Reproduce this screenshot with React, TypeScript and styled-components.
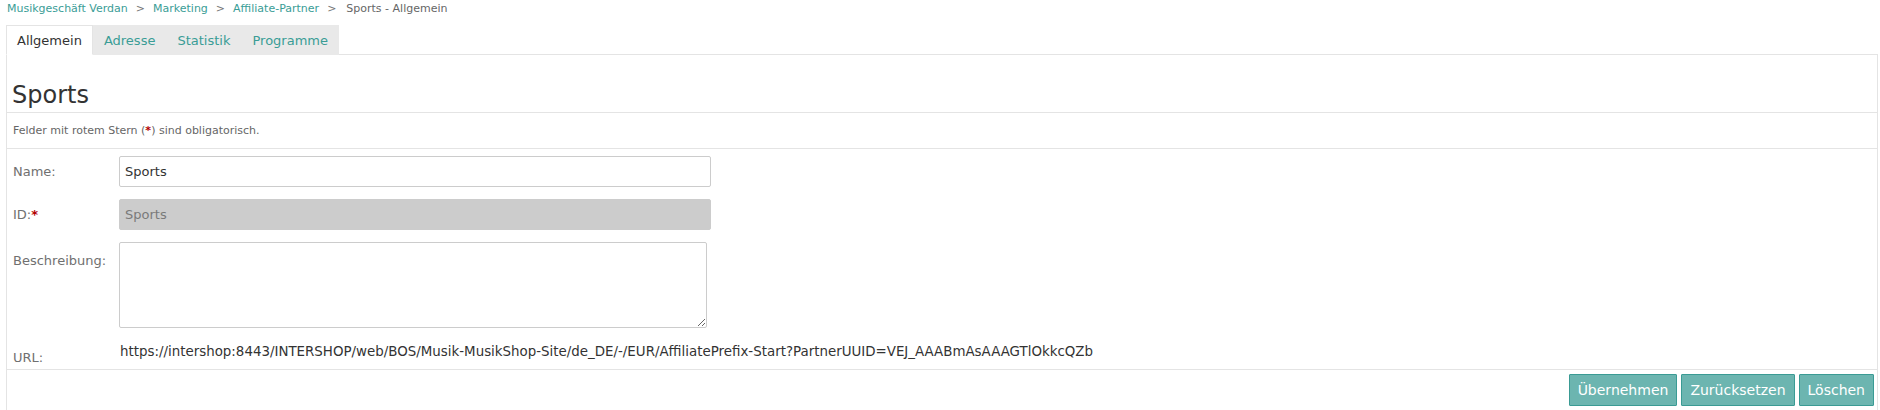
import React from "react";
import styled, { createGlobalStyle } from "styled-components";

const GlobalStyle = createGlobalStyle`
  html, body { margin: 0; padding: 0; background: #ffffff; }
  body { font-family: "DejaVu Sans", Verdana, sans-serif; color: #333333; }
  * { box-sizing: border-box; }
`;

const TEAL = "#3a9d96";
const LINE = "#e4e4e4";

const Page = styled.div`
  padding: 0 2px 0 6px;
`;

const Breadcrumb = styled.nav`
  height: 25px;
  padding: 1px 0 0 1px;
  font-size: 11px;
  line-height: 16px;
  color: #666666;
  white-space: nowrap;
`;

const Crumb = styled.a`
  color: ${TEAL};
  text-decoration: none;
`;

const Sep = styled.span`
  margin: 0 8px;
  color: #777777;
`;

const Current = styled.span`
  margin-left: 2px;
  color: #666666;
`;

const TabBar = styled.div`
  display: flex;
  height: 30px;
  margin-bottom: -1px;
  position: relative;
  z-index: 1;
`;

const Tab = styled.a<{ $active?: boolean }>`
  display: block;
  height: 30px;
  padding: 7px 10px 0;
  font-size: 13px;
  line-height: 16px;
  text-decoration: none;
  cursor: pointer;
  border: 1px solid ${(p) => (p.$active ? LINE : "transparent")};
  border-bottom-color: ${(p) => (p.$active ? "#ffffff" : "transparent")};
  background: ${(p) => (p.$active ? "#ffffff" : "#e9e9e9")};
  color: ${(p) => (p.$active ? "#333333" : TEAL)};
`;

const Panel = styled.section`
  border: 1px solid ${LINE};
  background: #ffffff;
  padding-bottom: 20px;
`;

const TitleBar = styled.div`
  padding: 26px 6px 3px 5px;
  border-bottom: 1px solid ${LINE};
`;

const Title = styled.h1`
  margin: 0;
  font-size: 24px;
  font-weight: normal;
  line-height: 28px;
  color: #333333;
`;

const Note = styled.div`
  padding: 10px 6px 9px;
  border-bottom: 1px solid ${LINE};
  font-size: 11px;
  line-height: 16px;
  color: #666666;
`;

const Star = styled.span`
  color: #b30000;
  font-weight: bold;
`;

const Form = styled.div`
  padding: 7px 6px 3px;
  border-bottom: 1px solid ${LINE};
`;

const Row = styled.div<{ $gap?: number }>`
  display: flex;
  align-items: flex-start;
  margin-bottom: ${(p) => p.$gap ?? 0}px;
`;

const Label = styled.label<{ $top: number }>`
  flex: 0 0 106px;
  padding-top: ${(p) => p.$top}px;
  font-size: 13px;
  line-height: 16px;
  color: #707070;
`;

const TextInput = styled.input`
  width: 592px;
  height: 31px;
  padding: 0 5px;
  border: 1px solid #cccccc;
  border-radius: 2px;
  font-family: "DejaVu Sans", Verdana, sans-serif;
  font-size: 13px;
  color: #333333;
  background: #ffffff;
  outline: none;

  &:disabled {
    background: #cccccc;
    border-color: #cccccc;
    color: #7a7a7a;
  }
`;

const TextArea = styled.textarea`
  width: 588px;
  height: 86px;
  padding: 4px 5px;
  border: 1px solid #cccccc;
  border-radius: 2px;
  font-family: "DejaVu Sans", Verdana, sans-serif;
  font-size: 13px;
  color: #333333;
  outline: none;
  display: block;
`;

const UrlValue = styled.div`
  padding-top: 16px;
  padding-left: 1px;
  font-size: 13.4px;
  line-height: 16px;
  color: #333333;
  white-space: nowrap;
`;

const ButtonBar = styled.div`
  display: flex;
  justify-content: flex-end;
  gap: 4px;
  padding: 4px 3px;
`;

const Button = styled.button`
  height: 32px;
  padding: 0 8px;
  border: 1px solid #3a9b94;
  border-radius: 1px;
  background: #6cb5b0;
  color: #ffffff;
  font-family: "DejaVu Sans", Verdana, sans-serif;
  font-size: 14px;
  line-height: 16px;
  cursor: pointer;
`;

export default function App() {
  const url =
    "https://intershop:8443/INTERSHOP/web/BOS/Musik-MusikShop-Site/de_DE/-/EUR/AffiliatePrefix-Start?PartnerUUID=VEJ_AAABmAsAAAGTlOkkcQZb";
  return (
    <>
      <GlobalStyle />
      <Page>
        <Breadcrumb>
          <Crumb href="#">Musikgeschäft Verdan</Crumb>
          <Sep>&gt;</Sep>
          <Crumb href="#">Marketing</Crumb>
          <Sep>&gt;</Sep>
          <Crumb href="#">Affiliate-Partner</Crumb>
          <Sep>&gt;</Sep>
          <Current>Sports - Allgemein</Current>
        </Breadcrumb>
        <TabBar>
          <Tab $active>Allgemein</Tab>
          <Tab>Adresse</Tab>
          <Tab>Statistik</Tab>
          <Tab>Programme</Tab>
        </TabBar>
        <Panel>
          <TitleBar>
            <Title>Sports</Title>
          </TitleBar>
          <Note>
            Felder mit rotem Stern (<Star>*</Star>) sind obligatorisch.
          </Note>
          <Form>
            <Row $gap={12}>
              <Label $top={8}>Name:</Label>
              <TextInput defaultValue="Sports" />
            </Row>
            <Row $gap={12}>
              <Label $top={8}>
                ID:<Star>*</Star>
              </Label>
              <TextInput defaultValue="Sports" disabled />
            </Row>
            <Row>
              <Label $top={11}>Beschreibung:</Label>
              <TextArea />
            </Row>
            <Row>
              <Label $top={22}>URL:</Label>
              <UrlValue>{url}</UrlValue>
            </Row>
          </Form>
          <ButtonBar>
            <Button>Übernehmen</Button>
            <Button>Zurücksetzen</Button>
            <Button>Löschen</Button>
          </ButtonBar>
        </Panel>
      </Page>
    </>
  );
}
